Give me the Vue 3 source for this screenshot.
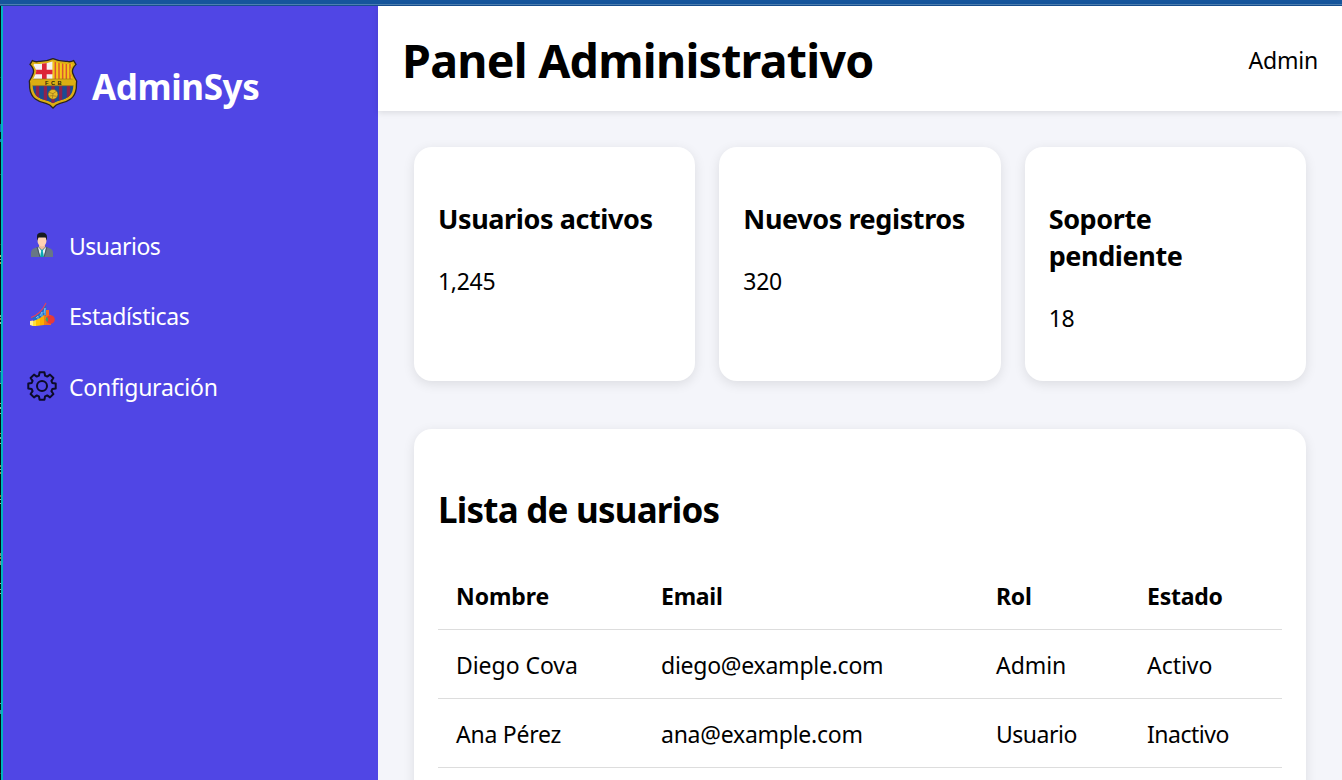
<script setup>
const cards = [
  { title: 'Usuarios activos', value: '1,245' },
  { title: 'Nuevos registros', value: '320' },
  { title: 'Soporte pendiente', value: '18' },
]
const users = [
  { name: 'Diego Cova', email: 'diego@example.com', role: 'Admin', state: 'Activo' },
  { name: 'Ana Pérez', email: 'ana@example.com', role: 'Usuario', state: 'Inactivo' },
]
// Offset, height and colour of the editor fragments visible along the window edge
const marks = [
  [71, 1, '#234'], [118, 8, '#1565b5'], [133, 3, '#1677b8'], [168, 1, '#345'],
  [238, 1, '#333'], [249, 2, '#c8a878'], [253, 1, '#999'], [256, 2, '#b98a50'],
  [309, 2, '#999'], [312, 2, '#8a7560'], [316, 2, '#aaa'],
  [365, 1, '#89a'], [366, 11, '#0a4f8c'], [377, 1, '#89a'],
  [397, 1, '#b98'], [401, 2, '#aaa'], [407, 1, '#aaa'], [427, 1, '#b75'],
  [431, 2, '#999'], [437, 1, '#aaa'], [459, 2, '#a76'], [463, 1, '#aaa'], [466, 2, '#a75'],
  [489, 2, '#a53'], [493, 1, '#aaa'], [497, 1, '#aaa'],
  [547, 3, '#8a7f75'], [551, 2, '#a64'], [555, 4, '#888'],
  [577, 1, '#aaa'], [583, 1, '#999'], [587, 1, '#aaa'],
  [697, 1, '#69a'], [704, 4, '#4480a8'], [767, 1, '#333'],
]
</script>

<template>
  <div class="window">
    <div class="topline"></div>
    <div class="edge">
      <i v-for="(m, i) in marks" :key="i" :style="{ top: m[0] + 'px', height: m[1] + 'px', background: m[2] }"></i>
    </div>
    <aside class="sidebar">
      <div class="brand">
        <svg class="crest" viewBox="0 0 162 168">
          <defs>
            <clipPath id="inner"><path d="M25 23Q55 27 81 16Q107 27 137 23L140 27Q128 42 133 53L143 74Q143 98 137 111Q130 127 103 133Q90 136 81 142Q72 136 59 133Q32 127 25 111Q19 98 19 74L29 53Q34 42 22 27Z" /></clipPath>
          </defs>
          <path class="shield" d="M19 14Q29 19 38 16Q61 17 81 8Q101 17 124 16Q133 19 143 14L150 25Q136 40 140 51Q144 63 152 75Q151 84 151 96Q148 119 134 129Q121 139 102 142Q90 145 81 156Q72 145 60 142Q41 139 28 129Q14 119 11 96Q11 84 10 75Q18 63 22 51Q26 40 12 25Z" />
          <g clip-path="url(#inner)">
            <rect width="80" height="70" fill="#f4f2f3" />
            <path d="M55 16V70M20 48H80" stroke="#dc2638" stroke-width="14" />
            <rect x="80" width="75" height="70" fill="#f5c719" />
            <path d="M88 16V70M99 16V70M110 16V70M121 16V70M132 16V70" stroke="#d95532" stroke-width="4.500" />
            <rect y="88" width="162" height="70" fill="#1b4b93" />
            <path d="M35 88V160M58 88V160M81 88V160M104 88V160M127 88V160" stroke="#8c224f" stroke-width="11" />
            <path d="M46.500 88V160M69.500 88V160M92.500 88V160M115.500 88V160" stroke="#1b4b93" stroke-width="12" />
            <rect y="69" width="162" height="20" fill="#dcae12" />
          </g>
          <path d="M22 69H140M20 89H142" stroke="#99741a" stroke-width="2" />
          <text x="62" y="86" class="letters">F</text>
          <text x="81" y="86" class="letters">C</text>
          <text x="101" y="86" class="letters">B</text>
          <circle cx="81" cy="115" r="14.500" fill="#e5bb26" stroke="#75501d" stroke-width="1.500" />
          <path d="M69 109L81 113L91 106M81 113L79 128M70 120L79 119L92 121" fill="none" stroke="#94701e" stroke-width="2" />
        </svg>
        <span class="brand-name">AdminSys</span>
      </div>
      <nav>
        <a>
          <svg class="icon" viewBox="0 0 30 30">
            <path d="M4 27V23Q4 19 8 18L13 16H17L22 18Q26 19 26 23V27Z" fill="#687785" />
            <path d="M11 17L15 21L19 17L17 27H13Z" fill="#e7f2f4" />
            <path d="M13.500 19H16.500L15.800 21L17 27H13L14.200 21Z" fill="#09a9b5" />
            <path d="M12 13H18V17L15 20L12 17Z" fill="#eebd9f" />
            <ellipse cx="15" cy="10.500" rx="4.500" ry="6" fill="#ffd2b3" />
            <path d="M10.200 11L10 6Q10 2.500 15 2.500Q20 2.500 20 7L19.800 11L18.700 7.500H11.500Z" fill="#161a20" />
            <path d="M10 17L13 27M20 17L17 27" stroke="#455563" />
          </svg>
          <span class="n1">Usuarios</span>
        </a>
        <a>
          <svg class="icon" viewBox="0 0 30 30">
            <path d="M5 18Q13 15 19 5L20 15L17 19L8 21Z" fill="#216fc5" />
            <path d="M3 21L6 20.500V26L3 25Z" fill="#fff29a" />
            <path d="M6 21L9 20V26H6Z" fill="#ffe13a" />
            <path d="M9 20L13 18V25.500L9 26Z" fill="#ffc400" />
            <path d="M13 18L17 15V25L13 25.500Z" fill="#ffac00" />
            <path d="M17 15L20 16V25L17 25Z" fill="#ee7e16" />
            <path d="M9 18L11 16V19M13 16L15 12V17M17 13L18 8V15" stroke="#78b9ef" stroke-width="1" fill="none" />
            <path d="M4 17.500Q14 14 19 3" fill="none" stroke="#df4559" stroke-width="1.100" />
            <path d="M19 10H22V15H24V25H19Z" fill="#f26c20" />
            <circle cx="23.500" cy="19.500" r="4.300" fill="#e53a38" />
            <path d="M19.500 17Q22 18 20.500 22L18.500 20Z" fill="#34a66b" />
          </svg>
          <span class="n2">Estadísticas</span>
        </a>
        <a>
          <svg class="icon" viewBox="0 0 30 30" fill="none" stroke="#0c0b28" stroke-width="2" stroke-linejoin="round">
            <path d="M12.600 1.300H17.400L18.100 4.700L20.200 5.600L23 3.600L26.400 7L24.400 9.800L25.300 11.900L28.700 12.600V17.400L25.300 18.100L24.400 20.200L26.400 23L23 26.400L20.200 24.400L18.100 25.300L17.400 28.700H12.600L11.900 25.300L9.800 24.400L7 26.400L3.600 23L5.600 20.200L4.700 18.100L1.300 17.400V12.600L4.700 11.900L5.600 9.800L3.600 7L7 3.600L9.800 5.600L11.900 4.700Z" />
            <circle cx="15" cy="15" r="5" />
          </svg>
          <span class="n3">Configuración</span>
        </a>
      </nav>
    </aside>
    <main>
      <header>
        <h1>Panel Administrativo</h1>
        <span class="account">Admin</span>
      </header>
      <section class="cards">
        <article v-for="c in cards" :key="c.title" class="card">
          <h3>{{ c.title }}</h3>
          <p>{{ c.value }}</p>
        </article>
      </section>
      <section class="panel">
        <h2>Lista de usuarios</h2>
        <table>
          <colgroup><col class="c1"><col class="c2"><col class="c3"><col></colgroup>
          <thead><tr><th>Nombre</th><th>Email</th><th>Rol</th><th>Estado</th></tr></thead>
          <tbody>
            <tr v-for="u in users" :key="u.email">
              <td>{{ u.name }}</td><td>{{ u.email }}</td><td>{{ u.role }}</td><td>{{ u.state }}</td>
            </tr>
          </tbody>
        </table>
      </section>
    </main>
  </div>
</template>

<style>
body { margin: 0; overflow: hidden; }
</style>

<style scoped>
* { box-sizing: border-box; }
.window {
  width: 1342px; height: 780px; overflow: hidden;
  display: grid; grid-template: 6px 774px / 3px 375px 964px;
  font-family: "Segoe UI", "Noto Sans", sans-serif; font-size: 23px; line-height: 36px;
  color: #000; background: #f4f5fa;
}
.topline { grid-column: 1 / 4; background: linear-gradient(#16559c 4px, #4d7fb1 4px 5px, #174e8f 5px); }
.edge { position: relative; background: linear-gradient(90deg, #050b12 1px, #00b5bd 1px); }
.edge i { position: absolute; left: 0; width: 1px; }
.sidebar { background: #5046e5; color: #fff; padding: 48px 24px; }
.brand { display: flex; align-items: center; height: 60px; }
.crest { width: 54px; height: 56px; margin: 0 12px 0 -1px; }
.shield { fill: #dcae12; stroke: #2a2420; stroke-width: 4px; }
.letters { font: bold 17px "Liberation Sans", sans-serif; fill: #211b13; text-anchor: middle; }
.brand-name { font-size: 35px; font-weight: 700; line-height: 48px; padding-top: 6px; letter-spacing: -.4px; }
nav { margin-top: 113px; display: flex; flex-direction: column; gap: 34.400px; }
nav a { display: flex; align-items: center; height: 36px; }
nav span { padding-top: 2px; }
.n1 { letter-spacing: -.5px; }
.n2 { letter-spacing: -.42px; }
.n3 { letter-spacing: -.25px; }
.icon { width: 30px; height: 30px; margin-right: 12px; }
header {
  height: 105px; display: flex; justify-content: space-between; align-items: center;
  padding: 3px 24px 0; background: #fff; box-shadow: 0 1.500px 6px rgba(0, 0, 0, .1);
}
h1 { margin: 0; font-size: 46.500px; line-height: 64px; letter-spacing: -.75px; }
.account { letter-spacing: -.2px; }
.cards { display: grid; grid-template-columns: repeat(3, 1fr); gap: 24px; padding: 36px 36px 48px; }
.card { height: 234px; padding: 53px 24px 0; border-radius: 18px; background: #fff; box-shadow: 0 3px 12px rgba(0, 0, 0, .1); }
h3 { margin: 0; font-size: 27px; line-height: 37px; letter-spacing: -.4px; }
p { margin: 26px 0 0; line-height: 36px; letter-spacing: -.3px; }
.panel { margin: 0 36px; padding: 54px 24px 24px; height: 400px; border-radius: 18px; background: #fff; box-shadow: 0 3px 12px rgba(0, 0, 0, .1); }
h2 { margin: 0; font-size: 35px; line-height: 53px; letter-spacing: -.78px; }
table { width: 100%; margin-top: 24px; table-layout: fixed; border-collapse: collapse; }
.c1 { width: 205px; }
.c2 { width: 335px; }
.c3 { width: 151px; }
th, td { height: 69px; padding: 3px 0 0 18px; text-align: left; border-bottom: 1px solid #ddd; white-space: nowrap; letter-spacing: -.25px; }
tr:first-child td:nth-child(odd), tr:first-child td:last-child, th:first-child { letter-spacing: -.05px; }
tr:last-child td:nth-child(n + 3) { letter-spacing: -.5px; }
</style>
